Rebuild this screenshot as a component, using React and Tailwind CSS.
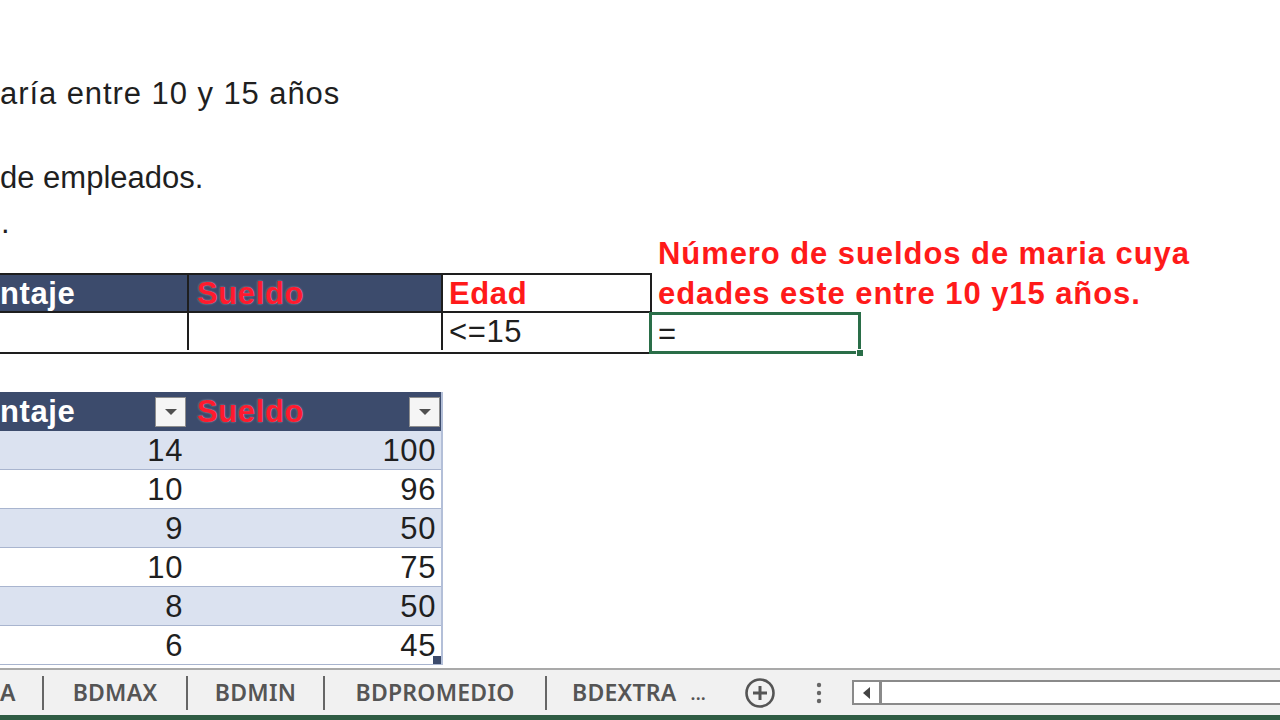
function FilterBtn() {
  return (
    <div className="w-[31px] h-[30px] bg-[#f5f5f5] border border-[#8e8e8e] flex items-center justify-center">
      <svg width="14" height="8" viewBox="0 0 14 8">
        <polygon points="1,1 13,1 7,7" fill="#505050" />
      </svg>
    </div>
  );
}

const rows = [
  ["14", "100"],
  ["10", "96"],
  ["9", "50"],
  ["10", "75"],
  ["8", "50"],
  ["6", "45"],
];

export default function App() {
  return (
    <div className="w-[1280px] h-[720px] overflow-hidden bg-white flex flex-col font-['Liberation_Sans',Arial,sans-serif] text-[31px] tracking-[0.02em] text-[#1f1f1f] leading-none">
      <div className="h-[668px] flex flex-col shrink-0">
        <div className="h-[73px] shrink-0" />
        <div className="h-[40px] flex items-center shrink-0 tracking-[0.03em]">aría entre 10 y 15 años</div>
        <div className="h-[44px] shrink-0" />
        <div className="h-[40px] flex items-center shrink-0 tracking-normal">de empleados.</div>
        <div className="h-[37px] flex items-center pl-[1px] pt-[14px] shrink-0">.</div>
        <div className="h-[39px] flex items-center shrink-0">
          <div className="w-[658px] shrink-0" />
          <span className="font-bold text-[#ff1a1a] tracking-[0.03em]">Número de sueldos de maria cuya</span>
        </div>

        {/* criteria table */}
        <div className="flex shrink-0">
          <div className="w-[652px] border-y-2 border-r-2 border-[#1e1e1e] shrink-0">
            <div className="flex h-[38px] border-b-2 border-[#1e1e1e]">
              <div className="w-[189px] bg-[#3c4b6c] border-r-2 border-[#1e1e1e] flex items-center text-white font-bold">ntaje</div>
              <div className="w-[254px] bg-[#3c4b6c] border-r-2 border-[#1e1e1e] flex items-center pl-[8px] text-[#ff1a2e] font-bold [text-shadow:0_0_2px_rgba(255,255,255,0.5)]">Sueldo</div>
              <div className="flex-1 flex items-center pl-[6px] text-[#ff1a1a] font-bold">Edad</div>
            </div>
            <div className="flex h-[37px]">
              <div className="w-[189px] border-r-2 border-[#1e1e1e]" />
              <div className="w-[254px] border-r-2 border-[#1e1e1e]" />
              <div className="flex-1 flex items-center pl-[6px]">&lt;=15</div>
            </div>
          </div>
          <div className="flex flex-col">
            <div className="h-[40px] flex items-center pl-[6px] font-bold text-[#ff1a1a] whitespace-nowrap tracking-[0.03em]">edades este entre 10 y15 años.</div>
            <div className="relative -ml-[3px] -mt-[1px] w-[212px] h-[42px] border-[3px] border-[#2a6e48] flex items-center pl-[6px]">
              =
              <div className="absolute -right-[6px] -bottom-[6px] w-[8px] h-[8px] bg-[#2a6e48] border border-white" />
            </div>
          </div>
        </div>

        <div className="h-[38px] shrink-0" />

        {/* data table */}
        <div className="w-[443px] border-r-2 border-[#b3bfd8] shrink-0">
          <div className="flex h-[39px] bg-[#3c4b6c]">
            <div className="w-[189px] flex items-center justify-between pr-[3px]">
              <span className="text-white font-bold">ntaje</span>
              <FilterBtn />
            </div>
            <div className="flex-1 flex items-center justify-between pl-[8px] pr-[1px]">
              <span className="text-[#ff1a2e] font-bold [text-shadow:0_0_2px_rgba(255,255,255,0.5)]">Sueldo</span>
              <FilterBtn />
            </div>
          </div>
          {rows.map((r, i) => (
            <div
              key={i}
              className={`relative flex h-[39px] border-b border-[#a9b5cf] ${i % 2 === 0 ? "bg-[#dbe2f0]" : "bg-white"}`}
            >
              <div className="w-[189px] flex items-center justify-end pr-[6px]">{r[0]}</div>
              <div className="flex-1 flex items-center justify-end pr-[5px]">{r[1]}</div>
              {i === rows.length - 1 && (
                <div className="absolute right-0 bottom-0 w-[8px] h-[8px] bg-[#3c4b6c]" />
              )}
            </div>
          ))}
        </div>
      </div>

      {/* sheet tab bar */}
      <div className="h-[52px] flex flex-col shrink-0 font-['Noto_Sans',sans-serif] text-[23px] font-semibold tracking-[0.01em] text-[#555]">
        <div className="h-[47px] bg-[#f1f1f1] border-t-2 border-[#a9a9a9] flex items-center">
          <div className="w-[42px] flex items-center shrink-0">A</div>
          <div className="w-[2px] h-[34px] bg-[#666] shrink-0" />
          <div className="w-[142px] flex justify-center shrink-0">BDMAX</div>
          <div className="w-[2px] h-[34px] bg-[#666] shrink-0" />
          <div className="w-[135px] flex justify-center shrink-0">BDMIN</div>
          <div className="w-[2px] h-[34px] bg-[#666] shrink-0" />
          <div className="w-[220px] flex justify-center shrink-0">BDPROMEDIO</div>
          <div className="w-[2px] h-[34px] bg-[#666] shrink-0" />
          <div className="pl-[25px] shrink-0">BDEXTRA</div>
          <div className="ml-[14px] shrink-0 text-[18px]">...</div>
          <div className="ml-[38px] shrink-0 flex items-center">
            <svg width="32" height="32" viewBox="0 0 32 32">
              <circle cx="16" cy="16" r="13.5" fill="none" stroke="#555" strokeWidth="2.6" />
              <line x1="16" y1="9" x2="16" y2="23" stroke="#555" strokeWidth="3" />
              <line x1="9" y1="16" x2="23" y2="16" stroke="#555" strokeWidth="3" />
            </svg>
          </div>
          <div className="ml-[40px] shrink-0 flex items-center">
            <svg width="6" height="24" viewBox="0 0 6 24">
              <circle cx="3" cy="4" r="2.2" fill="#666" />
              <circle cx="3" cy="12" r="2.2" fill="#666" />
              <circle cx="3" cy="20" r="2.2" fill="#666" />
            </svg>
          </div>
          <div className="ml-[30px] flex-1 h-[25px] flex border-y-2 border-l-2 border-[#8a8a8a] bg-white shrink-0">
            <div className="w-[28px] border-r-[3px] border-[#8a8a8a] flex items-center justify-center">
              <svg width="8" height="12" viewBox="0 0 8 12">
                <polygon points="7,0 7,12 0,6" fill="#444" />
              </svg>
            </div>
            <div className="flex-1" />
          </div>
        </div>
        <div className="h-[5px] bg-[#2f5c44]" />
      </div>
    </div>
  );
}
